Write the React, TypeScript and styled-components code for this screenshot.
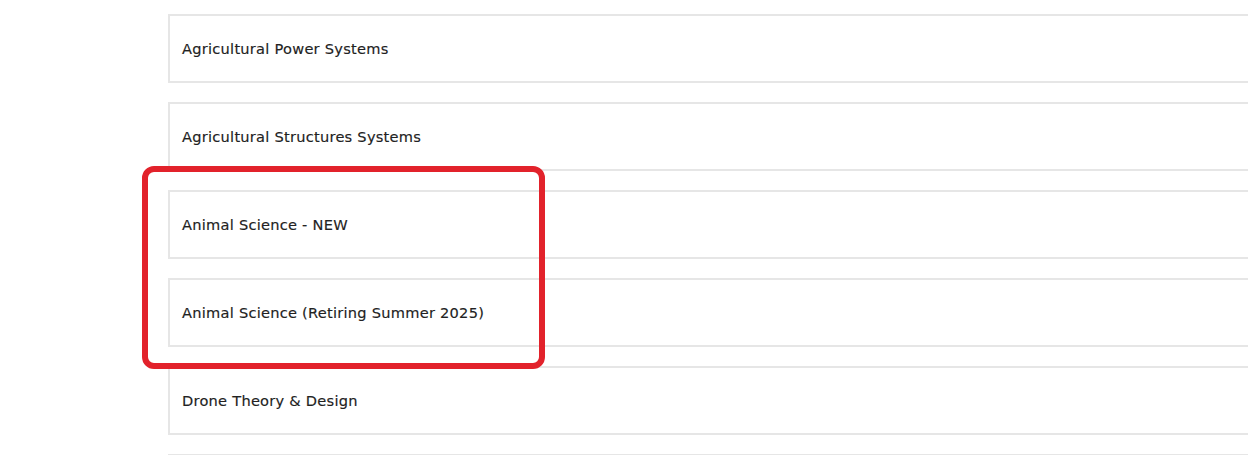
import React from 'react'
import styled, { createGlobalStyle } from 'styled-components'

const GlobalStyle = createGlobalStyle`
    html, body {
        margin: 0;
        padding: 0;
        background: #ffffff;
        overflow: hidden;
    }
`

const Page = styled.div`
    padding: 14px 0 0 168px;
    width: 1200px;
    font-family: "DejaVu Sans", Verdana, sans-serif;
`

const List = styled.div`
    display: flex;
    flex-direction: column;
    gap: 19px;
`

const Highlight = styled.div`
    position: relative;
    display: flex;
    flex-direction: column;
    gap: 19px;

    &::after {
        content: "";
        position: absolute;
        top: -24px;
        left: -26px;
        bottom: -22px;
        width: 403px;
        box-sizing: border-box;
        border: 6px solid #e2222b;
        border-radius: 12px;
        pointer-events: none;
    }
`

const Card = styled.div`
    box-sizing: border-box;
    height: 69px;
    display: flex;
    align-items: center;
    padding-left: 12px;
    border: 2px solid #e6e6e6;
    border-right: none;
    background: #ffffff;
`

const Title = styled.span`
    font-size: 14.6px;
    color: #222222;
    letter-spacing: 0.25px;
    -webkit-text-stroke: 0.15px #222222;
`

export default function App() {
    return (
        <>
            <GlobalStyle />
            <Page>
                <List>
                    <Card><Title>Agricultural Power Systems</Title></Card>
                    <Card><Title>Agricultural Structures Systems</Title></Card>
                    <Highlight>
                        <Card><Title>Animal Science - NEW</Title></Card>
                        <Card><Title>Animal Science (Retiring Summer 2025)</Title></Card>
                    </Highlight>
                    <Card><Title>Drone Theory &amp; Design</Title></Card>
                    <Card><Title>&nbsp;</Title></Card>
                </List>
            </Page>
        </>
    )
}
